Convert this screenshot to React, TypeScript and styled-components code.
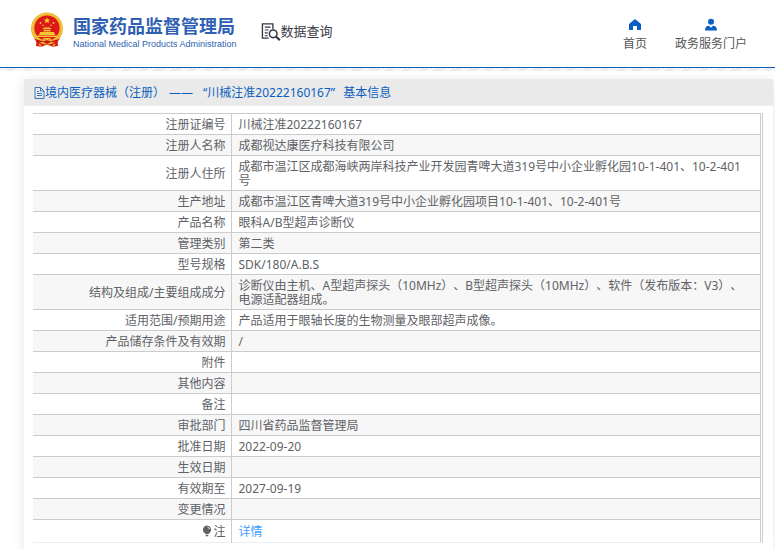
import React from "react";
import styled, { createGlobalStyle } from "styled-components";

const GlobalStyle = createGlobalStyle`
  * { box-sizing: border-box; }
  body {
    margin: 0;
    background: #fff;
    color: #606266;
    font-family: "Noto Sans", "Noto Sans CJK SC", sans-serif;
    font-size: 12px;
    line-height: 14px;
    text-spacing-trim: space-all;
  }
`;

const Page = styled.div`
  display: flex;
  flex-direction: column;
  min-height: 100vh;
`;

const Header = styled.header`
  display: flex;
  align-items: flex-start;
  height: 68px;
  padding: 0 28px 0 30px;
  border-bottom: 1px solid #0b5eb8;
`;

const Hatch = styled.div`
  height: 3px;
  background: repeating-linear-gradient(135deg, #fff 0 1px, #e4e4e4 1px 2px);
`;

const Brand = styled.a`
  display: flex;
  gap: 9px;
  padding-top: 12px;
  color: #2f5fb3;
  text-decoration: none;
`;

const BrandText = styled.div`
  display: flex;
  flex-direction: column;
  padding-top: 1px;
  white-space: nowrap;
`;

const BrandName = styled.span`
  font-size: 18px;
  line-height: 26px;
  font-weight: 700;
`;

const BrandEnglish = styled.span`
  font-family: "Liberation Sans", sans-serif;
  font-size: 9px;
  line-height: 10px;
  font-weight: 400;
`;

const Section = styled.a`
  display: flex;
  align-items: center;
  padding: 20px 0 0 24px;
  color: #3a3a44;
  font-size: 13px;
  line-height: 22px;
  text-decoration: none;
  white-space: nowrap;
`;

const Nav = styled.nav`
  display: flex;
  gap: 28px;
  margin-left: auto;
  padding-top: 18px;
`;

const NavLink = styled.a`
  display: flex;
  flex-direction: column;
  align-items: center;
  gap: 6px;
  color: #555;
  text-decoration: none;
  white-space: nowrap;
`;

const Card = styled.main`
  flex: 1;
  margin: 8px 2px 0 24px;
  background: #fff;
  box-shadow: 0 2px 12px rgba(0, 0, 0, 0.1);
`;

const CardHeader = styled.h1`
  display: flex;
  align-items: center;
  height: 27px;
  margin: 0;
  padding: 1px 10px 0;
  border-bottom: 1px solid #ebeef5;
  background: #eaeaea;
  color: #0b5fc0;
  font-size: 12px;
  font-weight: 400;
`;

const Dash = styled.span`
  margin: 0 10px 0 4px;
`;

const TitleSuffix = styled.span`
  margin-left: 8px;
`;

const TableFrame = styled.div`
  margin: 7px 10px 0 9px;
  padding-right: 1px;
  border-right: 1px solid #ccc;
`;

const Table = styled.table`
  width: 100%;
  border-collapse: collapse;
  border-right: 1px solid #ccc;
  border-bottom: 1px solid #ebeef5;
`;

const Row = styled.tr`
  border-top: 1px solid #ccc;
  &:nth-child(even) { background: #f7f7f7; }
  &:last-child { height: 23px; }
`;

const Label = styled.th`
  width: 198px;
  padding: 4px 5px 2px;
  border-right: 1px solid #ccc;
  font-weight: 400;
  text-align: right;
`;

const Value = styled.td`
  padding: 4px 10px 2px 7px;
`;

const DetailLink = styled.a`
  color: #409eff;
  text-decoration: none;
`;

const Bulb = styled.svg`
  margin-right: 1px;
  vertical-align: -1px;
`;

const Emblem = () => (
  <svg width="34" height="36" viewBox="0 0 34 36" aria-hidden="true">
    <path d="M7 25 6 34l5 .8 6-2 6 2 5-.8-1-9z" fill="#d81e16" />
    <circle cx="17" cy="16.5" r="16" fill="#edb52e" />
    <circle cx="17" cy="16.5" r="14.6" fill="none" stroke="#f9d35a" strokeDasharray="2 1" />
    <circle cx="17" cy="16" r="12.6" fill="#dc1916" />
    <path d="m17 5.3.9 2.1 2.3.2-1.7 1.5.5 2.2-2-1.2-2 1.2.5-2.2-1.7-1.5 2.3-.2z" fill="#f8c535" />
    <g fill="#f8c535">
      <circle cx="10.5" cy="11" r=".9" /><circle cx="13" cy="13.2" r=".8" />
      <circle cx="21" cy="13.2" r=".8" /><circle cx="23.5" cy="11" r=".9" />
      <path d="M12.5 17.2 14 15.5h6l1.5 1.7zM13.5 18h7v1.6h-7zM10 20h14l1 3H9zM7 23.4h20v1.5H7z" />
    </g>
    <path d="M4 26c4 3 8 2.3 9 .5h8c1 1.8 5 2.5 9-.5l-3 5-6-1-4 2-4-2-6 1z" fill="#ce1914" />
    <path d="M9 27.5c3 1.5 5 .5 5-1h6c0 1.5 2 2.5 5 1M12.5 29l4.5-1.5 4.5 1.5M9 32l2 2M25 32l-2 2" fill="none" stroke="#f3bd32" strokeWidth="1.2" />
  </svg>
);

const SearchDocument = () => (
  <svg width="20" height="20" viewBox="0 0 21 20" fill="none" stroke="#343449" aria-hidden="true">
    <path d="M8 17.5H1.5v-15h11V8" strokeWidth="1.4" />
    <path d="M4 6h6M4 9h4M4 12h3M4 15h3" strokeWidth="1.2" />
    <circle cx="12.8" cy="13" r="4" strokeWidth="1.6" />
    <path d="m15.8 16 4 3.6" strokeWidth="2.2" />
  </svg>
);

const HomeIcon = () => (
  <svg width="14" height="13" viewBox="0 0 14 13" fill="#0a5fc4" aria-hidden="true">
    <path d="M7 1 13 6v6H9V8H5v4H1V6z" />
  </svg>
);

const PersonIcon = () => (
  <svg width="14" height="13" viewBox="0 0 14 13" fill="#0a5fc4" aria-hidden="true">
    <circle cx="7" cy="3.7" r="3" />
    <path d="M1 12.5C1 9.5 2.3 7.8 5 7.8L7 9.8 9 7.8C11.7 7.8 13 9.5 13 12.5Z" />
  </svg>
);

const DocumentIcon = () => (
  <svg width="11" height="12" viewBox="0 0 11 12" fill="none" stroke="#3676bd" aria-hidden="true">
    <path d="M1 .5h5.5L10 4v7.5H1zM6.500.5V4H10M3 4.500h2M3 6.500h5M3 8.500h5" />
  </svg>
);

const BulbIcon = () => (
  <Bulb width="10" height="12" viewBox="0 0 10 12" aria-hidden="true">
    <path d="M5 .5A4.100 4.100 0 0 0 2.300 7.700L3.500 9h3l1.200-1.300A4.100 4.100 0 0 0 5 .5M3.700 9.800h2.600v1.400H3.700z" fill="#606266" />
    <path d="M5.500 2.200q1.800.3 2 2" fill="none" stroke="#fff" strokeWidth=".9" />
  </Bulb>
);

const records: [string, string][] = [
  ["注册证编号", "川械注准20222160167"],
  ["注册人名称", "成都视达康医疗科技有限公司"],
  ["注册人住所", "成都市温江区成都海峡两岸科技产业开发园青啤大道319号中小企业孵化园10-1-401、10-2-401号"],
  ["生产地址", "成都市温江区青啤大道319号中小企业孵化园项目10-1-401、10-2-401号"],
  ["产品名称", "眼科A/B型超声诊断仪"],
  ["管理类别", "第二类"],
  ["型号规格", "SDK/180/A.B.S"],
  ["结构及组成/主要组成成分", "诊断仪由主机、A型超声探头（10MHz）、B型超声探头（10MHz）、软件（发布版本：V3）、电源适配器组成。"],
  ["适用范围/预期用途", "产品适用于眼轴长度的生物测量及眼部超声成像。"],
  ["产品储存条件及有效期", "/"],
  ["附件", ""],
  ["其他内容", ""],
  ["备注", ""],
  ["审批部门", "四川省药品监督管理局"],
  ["批准日期", "2022-09-20"],
  ["生效日期", ""],
  ["有效期至", "2027-09-19"],
  ["变更情况", ""],
];

export default function App() {
  return (
    <Page lang="zh-CN">
      <GlobalStyle />
      <Header>
        <Brand href="#">
          <Emblem />
          <BrandText>
            <BrandName>国家药品监督管理局</BrandName>
            <BrandEnglish>National Medical Products Administration</BrandEnglish>
          </BrandText>
        </Brand>
        <Section href="#"><SearchDocument />数据查询</Section>
        <Nav>
          <NavLink href="#"><HomeIcon />首页</NavLink>
          <NavLink href="#"><PersonIcon />政务服务门户</NavLink>
        </Nav>
      </Header>
      <Hatch />
      <Card>
        <CardHeader>
          <DocumentIcon />
          境内医疗器械（注册）<Dash>——</Dash>“川械注准20222160167”<TitleSuffix>基本信息</TitleSuffix>
        </CardHeader>
        <TableFrame>
          <Table>
            <tbody>
              {records.map(([label, value]) => (
                <Row key={label}>
                  <Label scope="row">{label}</Label>
                  <Value>{value}</Value>
                </Row>
              ))}
              <Row>
                <Label scope="row"><BulbIcon />注</Label>
                <Value><DetailLink href="#">详情</DetailLink></Value>
              </Row>
            </tbody>
          </Table>
        </TableFrame>
      </Card>
    </Page>
  );
}
